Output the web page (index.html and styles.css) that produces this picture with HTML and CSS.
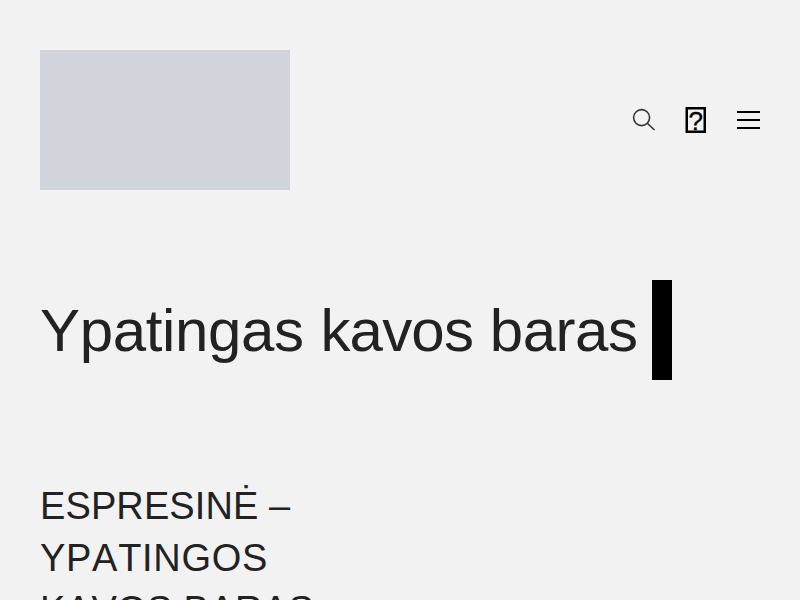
FILE: index.html
```html
<!DOCTYPE html>
<html lang="lt">
<head>
<meta charset="utf-8">
<title>Ypatingas kavos baras</title>
<link rel="stylesheet" href="styles.css">
</head>
<body>
<header class="header">
  <div class="logo"></div>
  <nav class="icons">
    <svg class="icon" width="24" height="24" viewBox="0 0 24 24" fill="none" stroke="#333" stroke-width="1.6"><circle cx="9.600" cy="9.600" r="8"/><path d="M15.500 15.500L22.500 22"/></svg>
    <svg class="icon help" width="24" height="28" viewBox="0 0 24 28"><rect class="help-box" x="2.750" y="2.250" width="18" height="23.500"/><text class="help-mark" x="11.750" y="23.500">?</text></svg>
    <svg class="icon" width="24" height="24" viewBox="0 0 24 24" fill="none" stroke="#000" stroke-width="2"><path d="M1 4H24M1 12H24M1 20H24"/></svg>
  </nav>
</header>
<main class="main">
  <div class="title-row">
    <h1 class="title"><span class="w-first">Ypatingas</span> <span class="w-second">kavos</span> <span class="w-third">baras</span></h1>
    <div class="cursor"></div>
  </div>
  <h2 class="sub"><span class="s-first">ESPRESINĖ</span> – <span class="s-second">YPATINGOS</span> <span class="s-third">KAVOS BARAS</span></h2>
</main>
</body>
</html>
```
FILE: styles.css
```css
html, body { margin: 0; padding: 0; height: 600px; overflow: hidden; }
body { background: #f2f2f2; font-family: Helvetica, "Liberation Sans", Arial, sans-serif; color: #222; }
.header { display: flex; justify-content: space-between; align-items: center; padding: 50px 40px 0; }
.logo { width: 250px; height: 140px; background: #d1d5db; }
.icons { display: flex; align-items: center; gap: 28px; }
.icon { display: block; }
.help { overflow: visible; }
.help-box { fill: none; stroke: #000; stroke-width: 2.5; }
.help-mark { font-family: "Liberation Sans", Arial, sans-serif; font-size: 26px; text-anchor: middle; fill: #000; stroke: #000; stroke-width: 0.3; }
.main { padding: 90px 40px 0; }
.title-row { display: flex; align-items: center; gap: 15px; }
.title { margin: 0; height: 100px; font-size: 60px; font-weight: 400; line-height: 102px; color: #222; }
.w-first { font-kerning: none; letter-spacing: -0.35px; }
.w-second { letter-spacing: -0.8px; }
.w-third { letter-spacing: -0.5px; }
.cursor { width: 20px; height: 100px; background: #000; }
.sub { margin: 100px 0 0; width: 300px; font-size: 38px; font-weight: 400; line-height: 52px; font-kerning: none; color: #222; }
.s-first { letter-spacing: 0.1px; }
.s-second { letter-spacing: 0.7px; }
.s-third { letter-spacing: 0.35px; }
```
